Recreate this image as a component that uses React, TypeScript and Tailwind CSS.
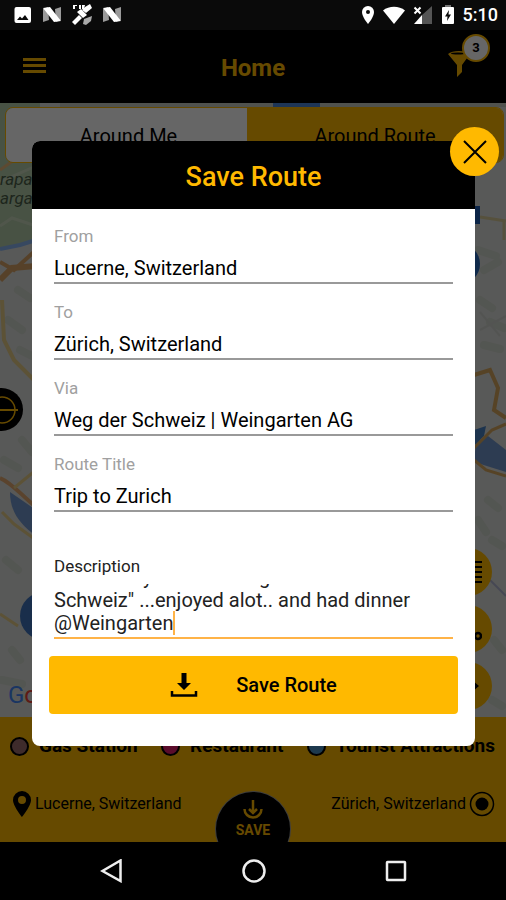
import { useLayoutEffect, useRef } from "react";

const description = 'What a day around "Weg der\nSchweiz" ...enjoyed alot.. and had dinner\n@Weingarten';

const fields = [
  { id: "from", label: "From", value: "Lucerne, Switzerland" },
  { id: "to", label: "To", value: "Zürich, Switzerland" },
  { id: "via", label: "Via", value: "Weg der Schweiz | Weingarten AG" },
  { id: "title", label: "Route Title", value: "Trip to Zurich" },
];

const legend = [
  { name: "Gas Station", dot: "bg-[#9c6b6b]" },
  { name: "Restaurant", dot: "bg-[#e0206c]" },
  { name: "Tourist Attractions", dot: "bg-[#4a8fc0]" },
];

function Nougat() {
  return (
    <svg width="20" height="18" viewBox="0 0 20 18" aria-hidden="true">
      <path d="M1 3 L6 1 L7 14 L1 16Z M13 3 L19 1 L19 14 L14 16Z" fill="#999" />
      <path d="M1 2 L8 1 L19 15 L12 16Z" fill="#fff" />
    </svg>
  );
}

function StatusBar() {
  return (
    <div className="flex h-[30px] shrink-0 items-center justify-between bg-[#0a0a0a] pr-2 pl-3.5 text-white">
      <div className="flex items-center gap-2.5">
        <svg width="18" height="18" viewBox="0 0 18 18" aria-hidden="true">
          <rect x="0.5" y="1" width="16.500" height="16" rx="2" fill="#fff" />
          <path d="M3 14 L6 10.500 L8 12.500 L11 9 L14.500 14Z" fill="#0a0a0a" />
        </svg>
        <Nougat />
        <svg width="20" height="22" viewBox="0 0 20 22" fill="#fff" aria-hidden="true">
          <path d="M1 1h4v1H3v3H1zM7 1h2v4H7zM10 1h3l-1 4h-2z" />
          <path d="M13 3 L18 0 L20 4 L14 9 L10 6Z" />
          <path d="M5 8 L9 5 L15 11 L11 14Z" />
          <path d="M7 11 L10 14 L3 21 L0 18Z" />
          <path d="M12 15 L20 12 L19 17 L14 21 L11 20Z" fill="#aaa" />
        </svg>
        <Nougat />
      </div>
      <div className="flex items-center gap-2">
        <svg width="14" height="20" viewBox="0 0 14 20" aria-hidden="true">
          <path d="M7 1a6 6 0 0 0-6 6c0 5 6 12 6 12s6-7 6-12a6 6 0 0 0-6-6z" fill="#fff" />
          <circle cx="7" cy="7" r="2" fill="#0a0a0a" />
        </svg>
        <svg width="22" height="18" viewBox="0 0 22 18" aria-hidden="true">
          <path d="M0 4.500 C6 -0.500 16 -0.500 22 4.500 L11 18Z" fill="#fff" />
        </svg>
        <svg width="20" height="18" viewBox="0 0 20 18" aria-hidden="true">
          <path d="M19 0V18H9V9Z" fill="#555" />
          <path d="M9 9V18H1Z" fill="#fff" />
          <path d="M1.500 1.500l6 6m0-6l-6 6" stroke="#fff" strokeWidth="2" />
        </svg>
        <svg width="14" height="20" viewBox="0 0 14 20" aria-hidden="true">
          <path d="M4 0h6v2h-6z" fill="#777" />
          <rect x="1" y="2" width="12" height="17" rx="1" fill="#fff" />
          <path d="M8 5 L4 11.500h2.500L6 16l4-6.500H7.500z" fill="#0a0a0a" />
        </svg>
        <span className="text-[18px] leading-6 font-medium">5:10</span>
      </div>
    </div>
  );
}

function Header() {
  return (
    <header className="grid h-[73px] shrink-0 grid-cols-3 bg-black px-4">
      <button aria-label="Menu" className="mt-[19px] ml-[7px] flex h-8 w-6 flex-col justify-center gap-[3px]">
        <span className="h-[3px] w-[23px] bg-[#ffb900]" />
        <span className="h-[3px] w-[23px] bg-[#ffb900]" />
        <span className="h-[3px] w-[23px] bg-[#ffb900]" />
      </button>
      <h1 className="mt-[22px] text-center text-[24px] leading-8 font-bold text-[#ffb900]">Home</h1>
      <button aria-label="Filters, 3 active" className="relative mt-1 h-[50px] w-[42px] justify-self-end">
        <svg width="24" height="28" viewBox="0 0 24 28" className="absolute top-4 left-0" aria-hidden="true">
          <path d="M0 4 C4 0 18 0 22 4 L14 15 V22 L9 27 V15Z" fill="#ffb900" />
          <ellipse cx="10" cy="3.500" rx="7" ry="1" fill="#000" />
        </svg>
        <span className="absolute top-0 right-0 flex size-7 items-center justify-center rounded-full border-2 border-[#ffb900] bg-white text-[13px] font-bold text-black">
          3
        </span>
      </button>
    </header>
  );
}

function MapArt() {
  return (
    <svg
      className="absolute inset-0 size-full"
      viewBox="0 103 506 614"
      preserveAspectRatio="none"
      fill="none"
      aria-hidden="true"
    >
      <rect y="103" width="506" height="614" fill="#dcdedb" />
      <path d="M0 103H40V240L0 250Z" fill="#b4ccaa" />
      <path d="M0 182 L36 166 M0 226 L12 218 L36 226" stroke="#c8d8bc" strokeWidth="3" />
      <path d="M0 170 L14 160 L8 150" stroke="#e8b87a" strokeWidth="3" />
      <path
        d="M18 290l12 8M8 320l14 10M20 350l12 6M4 460l14 8M22 440l10 12M6 560l12 10M2 680l20 4M12 650l8 10"
        stroke="#d0d6cc"
        strokeWidth="8"
        strokeLinecap="round"
      />
      <path d="M0 249 L20 245 L36 240" stroke="#8ab4f0" strokeWidth="4" />
      <path d="M0 280 L12 268 L36 266" stroke="#d8a468" strokeWidth="6" />
      <path d="M0 262 L14 270 L36 250" stroke="#d8a468" strokeWidth="4" />
      <path d="M2 300 L4 340 L14 360 L36 382" stroke="#e6cc88" strokeWidth="4" />
      <path d="M0 478 C12 483 20 494 36 507" stroke="#e0a870" strokeWidth="4" />
      <path d="M14 488 L36 470 M2 512 L14 524 L36 540 M0 614 L18 626" stroke="#e6cc88" strokeWidth="3" />
      <path d="M10 492 L36 510 V536 C20 524 10 512 10 492Z" fill="#7296cc" />
      <circle cx="44" cy="616" r="24" fill="#3f74bc" />
      <path d="M60 103H506V107H60Z" fill="#c8cec2" />
      <path d="M273 103H320V107H273Z" fill="#4a86d8" />
      <path
        d="M478 250l18 6M484 270l14-8M480 300l12 8M490 322l14 6M484 345l16 4M488 500l10 8M478 520l8 12M492 540l10 6M494 640l8 10M492 700l10 6"
        stroke="#d0d6cc"
        strokeWidth="8"
        strokeLinecap="round"
      />
      <path d="M480 330l26-14M480 312l20 24" stroke="#cfd2ce" strokeWidth="2" />
      <path d="M480 217 L506 221 M504 221V240" stroke="#d8ca98" strokeWidth="3" />
      <path d="M462 206h18v18h-18z" fill="#1f5cb4" />
      <circle cx="460" cy="264" r="20" fill="#2a69bc" />
      <path d="M474 375 L490 370 L498 388 L494 410 L506 418" stroke="#d8a860" strokeWidth="4" />
      <path d="M476 442 L488 436 L506 450 V472 L474 462Z" fill="#7296cc" />
      <path d="M474 430 L486 426 L484 436 L474 446Z" fill="#4a82c4" />
      <path d="M474 448 L492 430 L506 424 M474 460 L486 470 L506 476" stroke="#d8a860" strokeWidth="3" />
      <path d="M490 580 L506 596" stroke="#b0b4d0" strokeWidth="2" />
    </svg>
  );
}

function MapView() {
  return (
    <section aria-label="Map" className="relative flex-1 overflow-hidden pt-1 pr-0.5 pl-[5px]">
      <MapArt />
      <div className="relative grid h-14 grid-cols-[241px_1fr] overflow-hidden rounded-lg border border-[#ffb900] text-[20px] text-black">
        <button className="bg-white pt-0.5 pl-1">Around Me</button>
        <button className="bg-[#ffb900] pt-0.5">Around Route</button>
      </div>
      <p className="absolute top-[67px] left-0 text-[17px] leading-[19px] text-[#4a5e48] italic">
        rapar
        <br />
        argau
      </p>
      <button
        aria-label="My location"
        className="absolute top-[285px] -left-5 flex size-[43px] items-center justify-center rounded-full bg-black"
      >
        <svg width="32" height="32" viewBox="0 0 32 32" fill="none" stroke="#ffb900" strokeWidth="1.500" aria-hidden="true">
          <circle cx="16" cy="16" r="13" />
          <path d="M3 16H32" strokeWidth="2" />
        </svg>
      </button>
      <div className="absolute top-[445px] right-[14px] flex flex-col gap-[9px]">
        <button aria-label="List" className="flex size-12 items-center justify-center rounded-full bg-[#ffb900]">
          <svg width="28" height="24" viewBox="0 0 28 24" stroke="#000" strokeWidth="2" aria-hidden="true">
            <path d="M0 2H28M0 7H28M0 12H28M0 17H28M0 22H28" />
          </svg>
        </button>
        <button aria-label="Route" className="flex size-12 items-center justify-center rounded-full bg-[#ffb900]">
          <svg width="28" height="28" viewBox="0 0 28 28" fill="none" stroke="#000" strokeWidth="2.500" aria-hidden="true">
            <circle cx="4" cy="6" r="3" />
            <circle cx="24" cy="21" r="3" />
            <path d="M7 6h6v15h4" />
          </svg>
        </button>
        <button aria-label="Directions" className="flex size-12 items-center justify-center rounded-full bg-[#ffb900]">
          <svg width="24" height="24" viewBox="0 0 24 24" aria-hidden="true">
            <path d="M2 10h14V6l7 6-7 6v-4H2z" />
          </svg>
        </button>
      </div>
      <span className="absolute bottom-2 left-2 text-[24px] leading-7 text-[#4285f4]">
        G<span className="text-[#ea4335]">o</span>
        <span className="text-[#fbbc05]">o</span>
      </span>
    </section>
  );
}

function RouteFooter() {
  return (
    <footer className="shrink-0 bg-[#ffb900] text-black">
      <ul className="flex h-[51px] items-center justify-between pt-2 pr-[11px] pl-2.5 text-[19px] font-bold">
        {legend.map((item) => (
          <li key={item.name} className="flex items-center gap-2.5 whitespace-nowrap">
            <span className={`size-[19px] rounded-full border-2 border-black ${item.dot}`} />
            {item.name}
          </li>
        ))}
      </ul>
      <div className="relative h-[74px] overflow-hidden pr-[11px] pl-3 text-[16px]">
        <div className="flex h-[71px] items-center justify-between">
          <span className="flex items-center gap-[3px]">
            <svg width="20" height="28" viewBox="0 0 20 28" aria-hidden="true">
              <path
                fillRule="evenodd"
                d="M10 1a9 9 0 0 0-9 9c0 6 9 17 9 17s9-11 9-17a9 9 0 0 0-9-9zm0 5a4 4 0 1 1 0 8 4 4 0 0 1 0-8z"
              />
            </svg>
            Lucerne, Switzerland
          </span>
          <span className="flex items-center gap-[3px]">
            Zürich, Switzerland
            <svg width="26" height="26" viewBox="0 0 26 26" aria-hidden="true">
              <circle cx="13" cy="13" r="11.500" fill="none" stroke="#000" strokeWidth="1.500" />
              <circle cx="13" cy="13" r="6.500" />
            </svg>
          </span>
        </div>
        <button className="absolute top-[23px] left-1/2 flex size-[76px] -translate-x-1/2 flex-col items-center rounded-full border border-white/60 bg-black pt-2 text-[14px] leading-4 font-bold text-[#ffb900]">
          <svg width="20" height="22" viewBox="0 0 20 22" fill="none" stroke="#ffb900" strokeWidth="2.500" aria-hidden="true">
            <path d="M10 0V13M6 9l4 4 4-4M1.500 9a8.500 8.500 0 0 0 17 0" />
          </svg>
          SAVE
        </button>
      </div>
    </footer>
  );
}

function SaveRouteDialog() {
  const notes = useRef<HTMLTextAreaElement>(null);

  useLayoutEffect(() => {
    if (notes.current) notes.current.scrollTop = notes.current.scrollHeight;
  }, []);

  return (
    <div role="dialog" aria-modal="true" aria-labelledby="save-title" className="relative rounded-lg bg-white">
      <h2
        id="save-title"
        className="flex h-[68px] items-center justify-center rounded-t-lg bg-black pt-1 text-[27px] font-medium text-[#ffb900]"
      >
        Save Route
      </h2>
      <button
        aria-label="Close"
        className="absolute -top-[14px] -right-6 flex size-[49px] items-center justify-center rounded-full bg-[#ffb900]"
      >
        <svg width="24" height="24" viewBox="0 0 24 24" stroke="#000" strokeWidth="2" aria-hidden="true">
          <path d="M1 1L23 23M23 1L1 23" />
        </svg>
      </button>
      <form className="px-[17px] pt-[17px] pb-8" onSubmit={(e) => e.preventDefault()}>
        <div className="flex flex-col gap-[18px] px-[5px]">
          {fields.map((f) => (
            <div key={f.id} className="flex flex-col gap-2">
              <label htmlFor={f.id} className="text-[17px] leading-5 text-[#a0a0a0]">
                {f.label}
              </label>
              <input
                id={f.id}
                defaultValue={f.value}
                className="h-[30px] w-full border-b-2 border-[#999] text-[20px] text-black outline-none"
              />
            </div>
          ))}
        </div>
        <div className="relative mt-11 px-[5px]">
          <label htmlFor="description" className="block text-[17px] leading-5 text-[#222]">
            Description
          </label>
          <textarea
            id="description"
            ref={notes}
            defaultValue={description}
            className="mt-2 block h-[55px] w-full resize-none overflow-hidden border-b-2 border-[#ffb347] pb-0.5 text-[20px] leading-[23px] text-[#222] outline-none"
          />
          <span className="absolute bottom-1 left-[124px] h-6 w-[2px] bg-[#ffb347]" />
        </div>
        <button
          type="submit"
          className="mt-[17px] flex h-[58px] w-full items-center justify-center gap-[38px] rounded bg-[#ffb900] text-[20px] font-medium text-black"
        >
          <svg width="28" height="26" viewBox="0 0 28 26" aria-hidden="true">
            <path d="M11.500 1h5v10h4.500l-7 7-7-7h4.500z" />
            <path d="M2 19v4.500h24V19" fill="none" stroke="#000" strokeWidth="2.500" />
          </svg>
          Save Route
        </button>
      </form>
    </div>
  );
}

function NavBar() {
  return (
    <nav className="flex h-[58px] shrink-0 items-center justify-center gap-[118px] bg-black pl-0.5">
      <button aria-label="Back">
        <svg width="24" height="24" viewBox="0 0 24 24" fill="none" stroke="#eee" strokeWidth="2.500" aria-hidden="true">
          <path d="M20.500 1.500V22L2.500 12Z" />
        </svg>
      </button>
      <button aria-label="Home">
        <svg width="24" height="24" viewBox="0 0 24 24" fill="none" stroke="#eee" strokeWidth="2.500" aria-hidden="true">
          <circle cx="12" cy="12" r="10.500" />
        </svg>
      </button>
      <button aria-label="Recent apps">
        <svg width="24" height="24" viewBox="0 0 24 24" fill="none" stroke="#eee" strokeWidth="2.500" aria-hidden="true">
          <rect x="3" y="3" width="18" height="18" rx="0.5" />
        </svg>
      </button>
    </nav>
  );
}

export default function App() {
  return (
    <div className="flex min-h-screen w-full flex-col overflow-hidden bg-black font-[Roboto,sans-serif]">
      <StatusBar />
      <main className="relative flex flex-1 flex-col">
        <Header />
        <MapView />
        <RouteFooter />
        <div className="absolute inset-0 bg-black/60 pt-[111px] pr-[31px] pl-8">
          <SaveRouteDialog />
        </div>
      </main>
      <NavBar />
    </div>
  );
}
